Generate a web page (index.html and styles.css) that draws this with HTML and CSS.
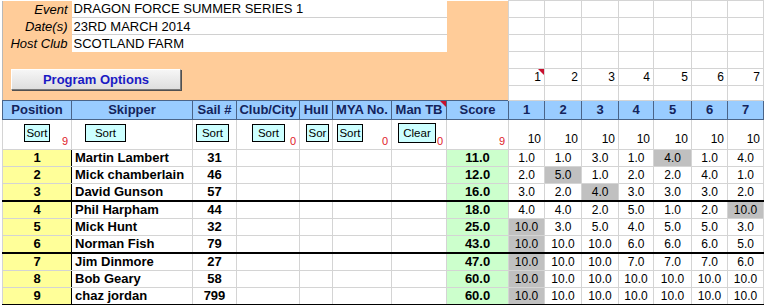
FILE: index.html
```html
<!DOCTYPE html>
<html lang="en">

<head>
    <meta charset="UTF-8">
    <title>Dragon Force Summer Series 1</title>
    <link rel="stylesheet" href="styles.css">
</head>

<body>
    <table class="sheet">
        <colgroup>
            <col class="w-pos"><col class="w-skip"><col class="w-sail"><col class="w-club"><col class="w-hull"><col class="w-mya"><col class="w-tb"><col class="w-score">
            <col class="w-r1"><col class="w-r2"><col class="w-r3"><col class="w-r4"><col class="w-r5"><col class="w-r6"><col class="w-r7">
        </colgroup>

        <!-- Event details -->
        <tr class="top">
            <td class="panel label">Event</td>
            <td class="box" colspan="6">DRAGON FORCE SUMMER SERIES 1</td>
            <td class="panel" rowspan="3"></td>
            <td class="grid"></td><td class="grid"></td><td class="grid"></td><td class="grid"></td><td class="grid"></td><td class="grid"></td><td class="grid"></td>
        </tr>
        <tr class="top">
            <td class="panel label">Date(s)</td>
            <td class="box" colspan="6">23RD MARCH 2014</td>
            <td class="grid"></td><td class="grid"></td><td class="grid"></td><td class="grid"></td><td class="grid"></td><td class="grid"></td><td class="grid"></td>
        </tr>
        <tr class="top">
            <td class="panel label">Host Club</td>
            <td class="box last" colspan="6">SCOTLAND FARM</td>
            <td class="grid"></td><td class="grid"></td><td class="grid"></td><td class="grid"></td><td class="grid"></td><td class="grid"></td><td class="grid"></td>
        </tr>
        <tr class="top">
            <td class="panel" colspan="8"></td>
            <td class="grid"></td><td class="grid"></td><td class="grid"></td><td class="grid"></td><td class="grid"></td><td class="grid"></td><td class="grid"></td>
        </tr>
        <tr class="top">
            <td class="panel options" colspan="8" rowspan="2"><button class="prog">Program Options</button></td>
            <td class="grid num note">1</td><td class="grid num">2</td><td class="grid num">3</td><td class="grid num">4</td><td class="grid num">5</td><td class="grid num">6</td><td class="grid num">7</td>
        </tr>
        <tr class="top short">
            <td class="grid"></td><td class="grid"></td><td class="grid"></td><td class="grid"></td><td class="grid"></td><td class="grid"></td><td class="grid"></td>
        </tr>

        <!-- Column headings -->
        <tr class="head">
            <td>Position</td><td>Skipper</td><td>Sail #</td><td>Club/City</td><td>Hull</td><td>MYA No.</td><td class="note">Man TB</td><td>Score</td>
            <td>1</td><td>2</td><td>3</td><td>4</td><td>5</td><td>6</td><td>7</td>
        </tr>

        <!-- Sort buttons -->
        <tr class="sorts">
            <td><div class="sc pad-pos"><button class="sort s-pos">Sort</button><span class="count">9</span></div></td>
            <td><div class="sc pad-skip"><button class="sort s-skip">Sort</button></div></td>
            <td><div class="sc pad-sail"><button class="sort s-sail">Sort</button></div></td>
            <td><div class="sc pad-club"><button class="sort s-club">Sort</button><span class="count">0</span></div></td>
            <td><div class="sc pad-hull"><button class="sort s-hull">Sor</button></div></td>
            <td><div class="sc pad-mya"><button class="sort s-mya">Sort</button><span class="count">0</span></div></td>
            <td><div class="sc pad-tb"><button class="sort s-clear">Clear</button><span class="count">0</span></div></td>
            <td><div class="sc"><span class="count">9</span></div></td>
            <td class="races">10</td><td class="races">10</td><td class="races">10</td><td class="races">10</td><td class="races">10</td><td class="races">10</td><td class="races">10</td>
        </tr>

        <!-- Results -->
        <tr class="row">
            <td class="pos">1</td><td class="name">Martin Lambert</td><td class="sail">31</td><td></td><td></td><td></td><td></td><td class="score">11.0</td>
            <td class="r">1.0</td><td class="r">1.0</td><td class="r">3.0</td><td class="r">1.0</td><td class="r drop">4.0</td><td class="r">1.0</td><td class="r">4.0</td>
        </tr>
        <tr class="row">
            <td class="pos">2</td><td class="name">Mick chamberlain</td><td class="sail">46</td><td></td><td></td><td></td><td></td><td class="score">12.0</td>
            <td class="r">2.0</td><td class="r drop">5.0</td><td class="r">1.0</td><td class="r">2.0</td><td class="r">2.0</td><td class="r">4.0</td><td class="r">1.0</td>
        </tr>
        <tr class="row end">
            <td class="pos">3</td><td class="name">David Gunson</td><td class="sail">57</td><td></td><td></td><td></td><td></td><td class="score">16.0</td>
            <td class="r">3.0</td><td class="r">2.0</td><td class="r drop">4.0</td><td class="r">3.0</td><td class="r">3.0</td><td class="r">3.0</td><td class="r">2.0</td>
        </tr>
        <tr class="row">
            <td class="pos">4</td><td class="name">Phil Harpham</td><td class="sail">44</td><td></td><td></td><td></td><td></td><td class="score">18.0</td>
            <td class="r">4.0</td><td class="r">4.0</td><td class="r">2.0</td><td class="r">5.0</td><td class="r">1.0</td><td class="r">2.0</td><td class="r drop">10.0</td>
        </tr>
        <tr class="row">
            <td class="pos">5</td><td class="name">Mick Hunt</td><td class="sail">32</td><td></td><td></td><td></td><td></td><td class="score">25.0</td>
            <td class="r drop">10.0</td><td class="r">3.0</td><td class="r">5.0</td><td class="r">4.0</td><td class="r">5.0</td><td class="r">5.0</td><td class="r">3.0</td>
        </tr>
        <tr class="row end">
            <td class="pos">6</td><td class="name">Norman Fish</td><td class="sail">79</td><td></td><td></td><td></td><td></td><td class="score">43.0</td>
            <td class="r drop">10.0</td><td class="r">10.0</td><td class="r">10.0</td><td class="r">6.0</td><td class="r">6.0</td><td class="r">6.0</td><td class="r">5.0</td>
        </tr>
        <tr class="row">
            <td class="pos">7</td><td class="name">Jim Dinmore</td><td class="sail">27</td><td></td><td></td><td></td><td></td><td class="score">47.0</td>
            <td class="r drop">10.0</td><td class="r">10.0</td><td class="r">10.0</td><td class="r">7.0</td><td class="r">7.0</td><td class="r">7.0</td><td class="r">6.0</td>
        </tr>
        <tr class="row">
            <td class="pos">8</td><td class="name">Bob Geary</td><td class="sail">58</td><td></td><td></td><td></td><td></td><td class="score">60.0</td>
            <td class="r drop">10.0</td><td class="r">10.0</td><td class="r">10.0</td><td class="r">10.0</td><td class="r">10.0</td><td class="r">10.0</td><td class="r">10.0</td>
        </tr>
        <tr class="row end">
            <td class="pos">9</td><td class="name">chaz jordan</td><td class="sail">799</td><td></td><td></td><td></td><td></td><td class="score">60.0</td>
            <td class="r drop">10.0</td><td class="r">10.0</td><td class="r">10.0</td><td class="r">10.0</td><td class="r">10.0</td><td class="r">10.0</td><td class="r">10.0</td>
        </tr>
    </table>
</body>

</html>
```

FILE: styles.css
```css
/* Page */

body {
    margin: 0;
    padding: 0 0 0 2px;
    font-family: "Liberation Sans", Arial, sans-serif;
    background: white;
    color: black;
}

.sheet {
    border-collapse: collapse;
    table-layout: fixed;
    width: 762px;
    border-left: 1px solid #b8b8b8;
}

.sheet td {
    padding: 0;
    font-size: 13px;
    line-height: 15px;
    white-space: nowrap;
    overflow: hidden;
}

/* Column widths */

.w-pos { width: 69px; }
.w-skip { width: 121px; }
.w-sail { width: 44px; }
.w-club { width: 63px; }
.w-hull { width: 33px; }
.w-mya { width: 59px; }
.w-tb { width: 55px; }
.w-score { width: 62px; }
.w-r1 { width: 36px; }
.w-r2 { width: 37px; }
.w-r3 { width: 37px; }
.w-r4 { width: 35px; }
.w-r5 { width: 38px; }
.w-r6 { width: 36px; }
.w-r7 { width: 36px; }

/* Event panel */

.top td {
    height: 16px;
}

.top.short td {
    height: 14px;
}

.panel {
    background: #ffcc99;
}

.label {
    font-style: italic;
    text-align: right;
    padding-right: 4px !important;
}

.box {
    background: white;
    border-bottom: 1px solid #d0d0d0;
    padding-left: 2px !important;
}

.box.last {
    border-bottom: none;
}

.options {
    vertical-align: top;
    padding-left: 8px !important;
}

.prog {
    display: block;
    width: 170px;
    height: 21px;
    padding: 0;
    font-family: "Liberation Sans", Arial, sans-serif;
    font-size: 13px;
    font-weight: bold;
    color: #1a1ac4;
    background: linear-gradient(#f6f6f6, #dedede);
    border: 1px solid;
    border-color: #ffffff #7a7a7a #7a7a7a #ffffff;
    box-shadow: 1px 1px 0 #505050;
}

.grid {
    border: 1px solid #d4d4d4;
}

.num {
    text-align: right;
    padding-right: 3px !important;
    font-size: 12px !important;
}

/* Comment marker */

.note {
    position: relative;
}

.note::after {
    content: "";
    position: absolute;
    top: 0;
    right: 0;
    border-top: 6px solid #c8102e;
    border-left: 6px solid transparent;
}

/* Headings */

.head td {
    height: 18px;
    background: #99ccff;
    color: #14245c;
    font-weight: bold;
    text-align: center;
    border: 1px solid #4a6488;
    line-height: 18px;
}

/* Sort row */

.sorts td {
    height: 27px;
    border-left: 1px solid #d4d4d4;
    border-right: 1px solid #d4d4d4;
    vertical-align: top;
}

.sc {
    display: flex;
    align-items: flex-start;
    height: 27px;
    padding-right: 3px;
}

.pad-pos { padding-left: 21px; }
.pad-skip { padding-left: 13px; }
.pad-sail { padding-left: 3px; }
.pad-club { padding-left: 15px; }
.pad-hull { padding-left: 6px; }
.pad-mya { padding-left: 4px; }
.pad-tb { padding-left: 6px; }

.sort {
    height: 18px;
    margin-top: 4px;
    padding: 0;
    font-family: "Liberation Sans", Arial, sans-serif;
    font-size: 11.5px;
    color: black;
    background: #ccffff;
    border: 1px solid #000;
    overflow: hidden;
}

.s-pos { width: 26px; }
.s-skip { width: 41px; }
.s-sail { width: 33px; }
.s-club { width: 33px; }
.s-hull { width: 23px; }
.s-mya { width: 26px; }
.s-clear { width: 38px; height: 20px; margin-top: 3px; }

.count {
    margin-left: auto;
    align-self: flex-end;
    color: #e0202a;
    font-size: 11px;
    line-height: 12px;
}

.races {
    text-align: right;
    vertical-align: bottom !important;
    font-size: 12px !important;
    padding: 0 3px 2px 0 !important;
}

/* Results */

.row td {
    height: 16px;
    line-height: 16px;
    border: 1px solid #d4d4d4;
}

.row.end td {
    height: 15px;
    border-bottom: 2px solid #000;
}

.pos {
    background: #ffff99;
    font-weight: bold;
    text-align: center;
    border-right: 1px solid #000 !important;
}

.name {
    font-weight: bold;
    padding-left: 3px !important;
}

.sail {
    font-weight: bold;
    text-align: center;
}

.score {
    background: #ccffcc;
    font-weight: bold;
    text-align: center;
}

.r {
    font-size: 12px !important;
    text-align: center;
}

.drop {
    background: #c0c0c0;
}
```
